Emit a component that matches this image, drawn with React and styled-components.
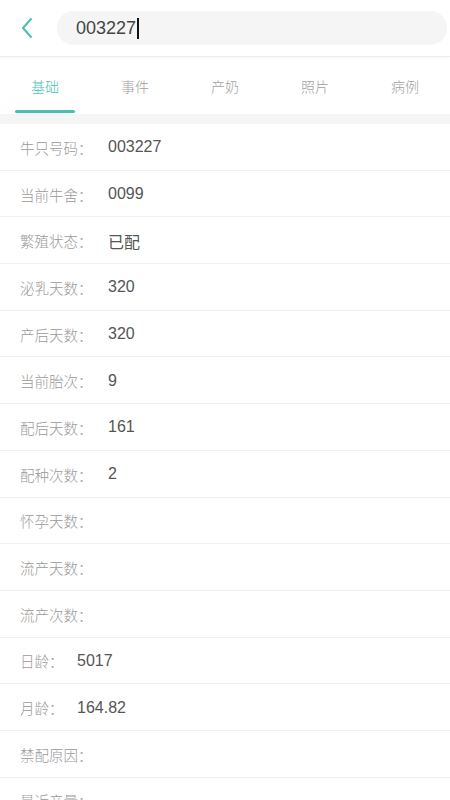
import React from "react";
import styled, { createGlobalStyle } from "styled-components";

const Global = createGlobalStyle`
  html, body { margin: 0; padding: 0; background: #fff; }
  body { font-family: "Noto Sans CJK SC", "Liberation Sans", sans-serif; }
  * { box-sizing: border-box; }
`;

const Page = styled.div`
  width: 450px;
  height: 800px;
  overflow: hidden;
  background: #fff;
  display: flex;
  flex-direction: column;
  & > * { flex-shrink: 0; }
`;

const Header = styled.div`
  height: 57px;
  display: flex;
  align-items: center;
  padding: 0 3px 0 0;
  border-bottom: 1px solid #ececec;
  box-shadow: 0 1px 2px rgba(0,0,0,0.04);
`;

const Back = styled.div`
  width: 57px;
  display: flex;
  justify-content: center;
  align-items: center;
  padding-right: 4px;
`;

const Search = styled.div`
  flex: 1;
  height: 34px;
  border-radius: 17px;
  background: #f5f5f5;
  display: flex;
  align-items: center;
  padding-left: 19px;
  font-family: "Liberation Sans", "Noto Sans CJK SC", sans-serif;
  font-size: 18px;
  color: #444;
`;

const Caret = styled.span`
  display: inline-block;
  width: 2px;
  height: 21px;
  background: #111;
  margin-left: 1px;
`;

const Tabs = styled.div`
  height: 57px;
  display: grid;
  grid-template-columns: repeat(5, 1fr);
  border-bottom: 10px solid #f5f5f5;
  box-sizing: content-box;
`;

const Tab = styled.div`
  position: relative;
  display: flex;
  align-items: center;
  justify-content: center;
  font-size: 14px;
  font-weight: 300;
  color: ${p => (p.$active ? "#4cbfb3" : "#a0a0a0")};
  &::after {
    content: "";
    display: ${p => (p.$active ? "block" : "none")};
    position: absolute;
    bottom: 1px;
    left: 15px;
    right: 15px;
    height: 3px;
    border-radius: 2px;
    background: #4cbfb3;
  }
`;

const List = styled.div`
  display: flex;
  flex-direction: column;
`;

const Row = styled.div`
  height: 46.7px;
  display: flex;
  align-items: center;
  padding-left: 20px;
  padding-top: 1px;
  border-bottom: 1px solid #f1f1f1;
  font-size: 14.5px;
  flex-shrink: 0;
`;

const Label = styled.span`
  color: #9a9a9a;
  font-weight: 300;
  width: ${p => (p.$short ? "57px" : "88px")};
  flex-shrink: 0;
`;

const Value = styled.span`
  color: #555;
  font-family: "Liberation Sans", "Noto Sans CJK SC", sans-serif;
  font-size: 16px;
`;

const rows = [
  ["牛只号码：", "003227"],
  ["当前牛舍：", "0099"],
  ["繁殖状态：", "已配"],
  ["泌乳天数：", "320"],
  ["产后天数：", "320"],
  ["当前胎次：", "9"],
  ["配后天数：", "161"],
  ["配种次数：", "2"],
  ["怀孕天数：", ""],
  ["流产天数：", ""],
  ["流产次数：", ""],
  ["日龄：", "5017", true],
  ["月龄：", "164.82", true],
  ["禁配原因：", ""],
  ["最近产量：", ""],
];

export default function App() {
  return (
    <Page>
      <Global />
      <Header>
        <Back>
          <svg width="14" height="22" viewBox="0 0 14 22">
            <path d="M11 2 L3 11 L11 20" fill="none" stroke="#4cbfb3" strokeWidth="2" strokeLinecap="round" strokeLinejoin="round" />
          </svg>
        </Back>
        <Search>
          003227<Caret />
        </Search>
      </Header>
      <Tabs>
        <Tab $active>基础</Tab>
        <Tab>事件</Tab>
        <Tab>产奶</Tab>
        <Tab>照片</Tab>
        <Tab>病例</Tab>
      </Tabs>
      <List>
        {rows.map(([l, v, s], i) => (
          <Row key={i}>
            <Label $short={s}>{l}</Label>
            <Value>{v}</Value>
          </Row>
        ))}
      </List>
    </Page>
  );
}
